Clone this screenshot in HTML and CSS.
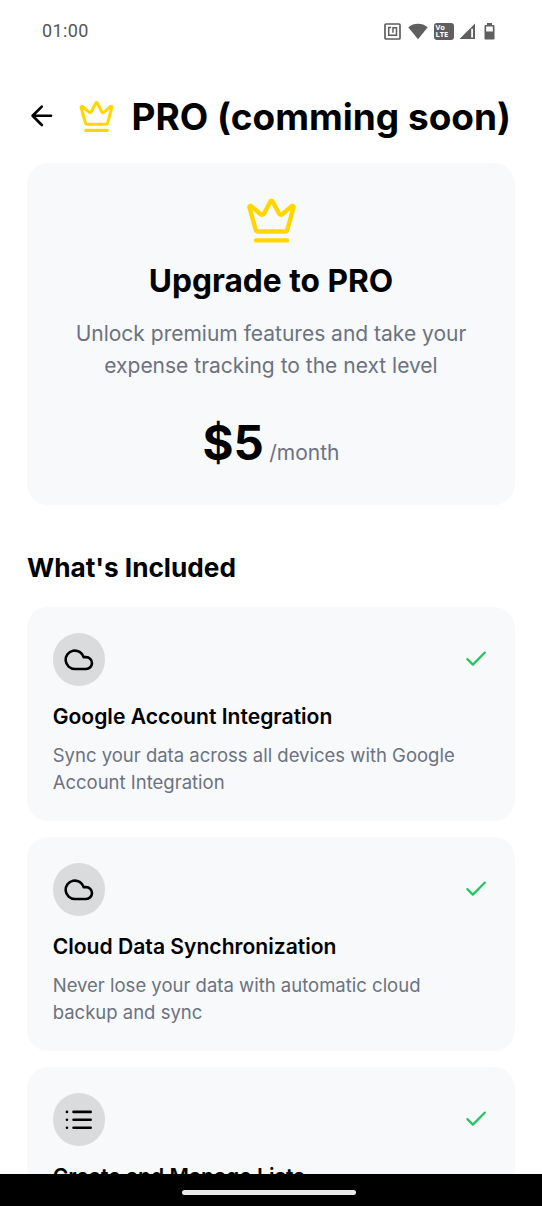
FILE: index.html
```html
<!DOCTYPE html>
<html lang="en">
<head>
<meta charset="utf-8">
<meta name="viewport" content="width=device-width, initial-scale=1">
<title>PRO</title>
<link rel="stylesheet" href="styles.css">
</head>
<body>
<svg class="symbols" aria-hidden="true">
  <symbol id="crown" viewBox="0 0 24 24"><path d="M11.562 3.266a.5.5 0 0 1 .876 0L15.39 8.87a1 1 0 0 0 1.516.294L21.183 5.5a.5.5 0 0 1 .798.519l-2.834 10.246a1 1 0 0 1-.956.734H5.81a1 1 0 0 1-.957-.734L2.02 6.02a.5.5 0 0 1 .798-.519l4.276 3.664a1 1 0 0 0 1.516-.294zM5 21h14"/></symbol>
  <symbol id="cloud" viewBox="0 0 24 24"><path d="M17.5 19H9a7 7 0 1 1 6.71-9h1.79a4.5 4.5 0 1 1 0 9Z"/></symbol>
  <symbol id="check" viewBox="0 0 24 24"><path d="M20 6 9 17l-5-5"/></symbol>
</svg>
<div class="screen">
  <header class="status">
    <span class="clock">01:00</span>
    <div class="indicators">
      <svg width="17" height="17" viewBox="0 0 17 17" fill="none" stroke="#5f5f5f"><rect x="1" y="1" width="15" height="15" rx="1" stroke-width="1.7"/><path d="M7.2 4.5H4.7v7.8h7.8V4.7H9v5" stroke-width="1.5"/></svg>
      <svg width="20" height="17" viewBox="0 0 20 17" fill="#5f5f5f"><path d="M.3 4.2C5.900 -.3 14.100 -.3 19.700 4.200L10 16.300z"/></svg>
      <div class="volte"><span>Vo</span><span>LTE</span></div>
      <svg class="signal" width="17" height="17" viewBox="0 0 17 17"><path d="M16 .5v15.500H.5z" fill="#5f5f5f"/><path d="M12.200 5.800h1.800v8.700h-1.800z" fill="#fff"/></svg>
      <svg width="11" height="18" viewBox="0 0 11 18"><path d="M3 1h5v2h1.500q1 0 1 1v12.500q0 1-1 1h-8q-1 0-1-1V4q0-1 1-1H3z" fill="#5f5f5f"/><path d="M2.200 4.500h6.600v5H2.200z" fill="#fff"/></svg>
    </div>
  </header>
  <div class="titlebar">
    <svg class="icon back" viewBox="0 0 24 24"><path d="m12 19-7-7 7-7M19 12H5"/></svg>
    <svg class="icon crown-small"><use href="#crown"/></svg>
    <h1>PRO (comming soon)</h1>
  </div>
  <main>
    <section class="card hero">
      <svg class="icon crown-large"><use href="#crown"/></svg>
      <h2>Upgrade to PRO</h2>
      <p>Unlock premium features and take your<br>expense tracking to the next level</p>
      <div class="price"><strong>$5</strong><span>/month</span></div>
    </section>
    <h3>What's Included</h3>
    <div class="features">
      <article class="card feature">
        <div class="feature-top"><div class="badge"><svg class="icon"><use href="#cloud"/></svg></div><svg class="icon check"><use href="#check"/></svg></div>
        <h4>Google Account Integration</h4>
        <p>Sync your data across all devices with Google<br>Account Integration</p>
      </article>
      <article class="card feature">
        <div class="feature-top"><div class="badge"><svg class="icon"><use href="#cloud"/></svg></div><svg class="icon check"><use href="#check"/></svg></div>
        <h4>Cloud Data Synchronization</h4>
        <p>Never lose your data with automatic cloud<br>backup and sync</p>
      </article>
      <article class="card feature">
        <div class="feature-top"><div class="badge"><svg class="icon" viewBox="0 0 24 24"><path d="M8 6h13M8 12h13M8 18h13M3 6h.01M3 12h.01M3 18h.01"/></svg></div><svg class="icon check"><use href="#check"/></svg></div>
        <h4>Create and Manage Lists</h4>
      </article>
    </div>
  </main>
  <footer><div class="handle"></div></footer>
</div>
</body>
</html>
```
FILE: styles.css
```css
* { box-sizing: border-box; }
body { margin: 0; background: #fff; color: #000; font-family: Inter, sans-serif; }
h1, h2, h3, h4, p { margin: 0; white-space: nowrap; }
.symbols { display: none; }
.screen { height: 1206px; display: flex; flex-direction: column; overflow: hidden; }
.status { flex: none; height: 62px; padding: 0 47px 0 42px; display: flex; align-items: center; justify-content: space-between; }
.clock { font: 400 18px/24px Roboto, sans-serif; letter-spacing: .4px; color: #555; }
.indicators { display: flex; align-items: center; gap: 6.500px; }
.signal { margin: 0 2px 0 -2px; }
.volte { width: 20px; height: 17px; padding: 1px 0 0 1.500px; border-radius: 3px; background: #5f5f5f; color: #fff; display: flex; flex-direction: column; font: 700 7.500px/7.500px "Open Sans", sans-serif; }
.volte span { display: block; height: 7.500px; }
.icon { flex: none; display: block; width: 31.6px; height: 31.6px; fill: none; stroke: #000; stroke-width: 2; stroke-linecap: round; stroke-linejoin: round; }
.titlebar { flex: none; height: 101px; padding: 7px 0 0 26px; display: flex; align-items: center; }
.crown-small { width: 37px; height: 37px; margin-left: 20.700px; stroke: #ffd700; }
h1 { margin: 2px 0 0 16.200px; font-size: 37px; line-height: 46px; font-weight: 700; }
main { flex: 1; min-height: 0; overflow: hidden; padding: 0 27px; }
.card { background: #f8f9fb; border-radius: 21px; }
.hero { height: 342px; padding-top: 31px; display: flex; flex-direction: column; align-items: center; text-align: center; }
.crown-large { width: 53px; height: 53px; stroke: #ffd700; }
h2 { margin-top: 14px; font-size: 31.700px; line-height: 40px; font-weight: 700; }
.hero p { margin-top: 17.400px; font-size: 21px; line-height: 31.600px; color: #6b7280; }
.price { margin-top: 31.600px; display: flex; align-items: baseline; gap: 5.500px; }
.price strong { font-size: 47.400px; line-height: 60px; font-weight: 700; }
.price span { font-size: 21px; color: #6b7280; }
h3 { margin: 46px 0 22px; font-size: 26.200px; line-height: 34px; font-weight: 700; }
.features { display: flex; flex-direction: column; gap: 16px; }
.feature { height: 214px; padding: 26px 25.700px 26px 25.700px; }
.feature-top { height: 53px; display: flex; align-items: center; justify-content: space-between; }
.badge { width: 52.600px; height: 52.600px; border-radius: 50%; background: #dadbdd; display: grid; place-items: center; }
.check { width: 26.300px; height: 26.300px; stroke: #22c55e; }
h4 { margin-top: 18px; font-size: 21.100px; line-height: 26px; font-weight: 600; }
.feature p { margin-top: 12.400px; font-size: 18.500px; line-height: 26.300px; color: #6b7280; }
footer { flex: none; height: 32px; background: #000; display: flex; align-items: center; justify-content: center; padding: 5px 0 0 0; }
.handle { width: 174px; height: 5px; border-radius: 3px; background: #ebebeb; margin-left: -4px; }
```
